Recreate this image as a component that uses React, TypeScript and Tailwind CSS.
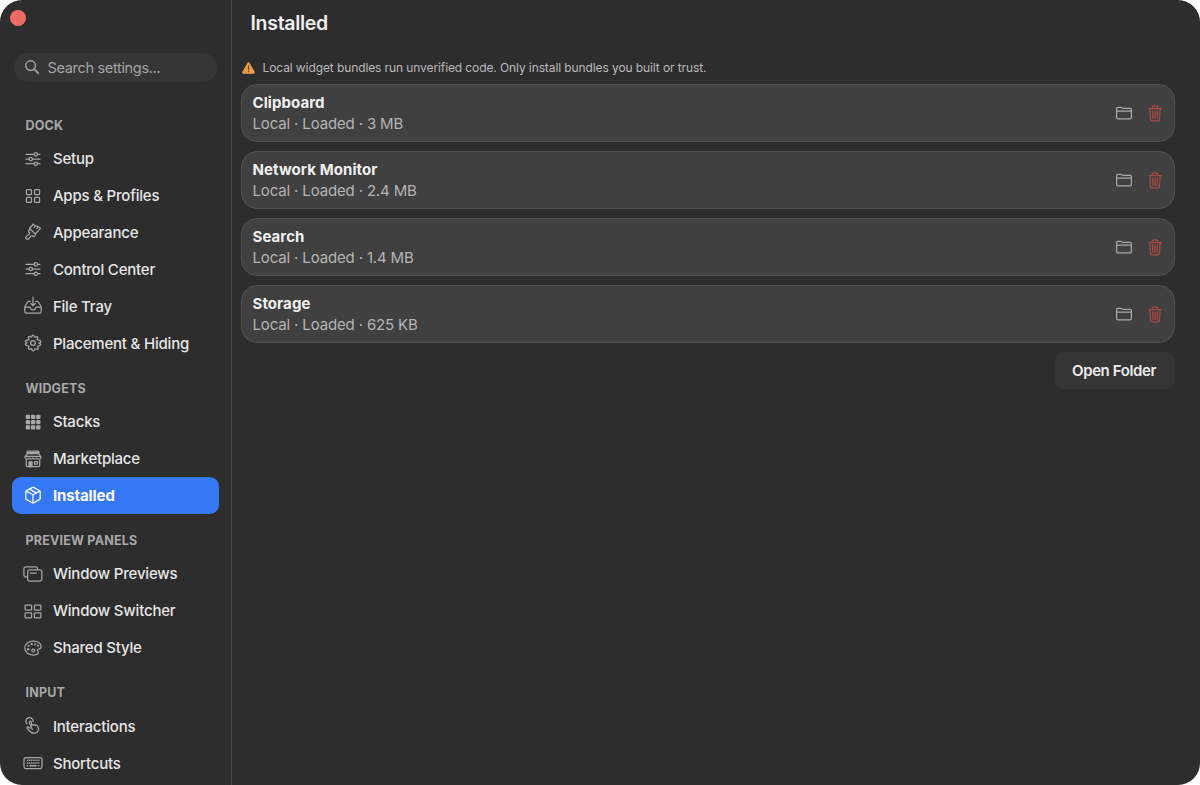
import { useState } from 'react';
import type { ReactNode } from 'react';
import clsx from 'clsx';

interface NavItem {
  label: string;
  icon: ReactNode;
}

interface NavSection {
  title: string;
  items: NavItem[];
}

interface Widget {
  name: string;
  size: string;
}

function Icon({ children }: { children: ReactNode }) {
  return (
    <svg
      viewBox="0 0 20 20"
      className="size-5 shrink-0"
      fill="none"
      stroke="currentColor"
      strokeWidth="1.25"
      strokeLinecap="round"
      strokeLinejoin="round"
    >
      {children}
    </svg>
  );
}

const slidersIcon = (
  <Icon>
    <path d="M3 5.3h7.9M14.7 5.3h2.3M3 10h2.9M9.7 10H17M3 14.7h7.9M14.7 14.7h2.3" />
    <circle cx="12.8" cy="5.3" r="1.7" />
    <circle cx="7.8" cy="10" r="1.7" />
    <circle cx="12.8" cy="14.7" r="1.7" />
  </Icon>
);

const squaresIcon = (
  <Icon>
    <rect x="3.4" y="3.6" width="5.1" height="5.1" rx="1" />
    <rect x="11.5" y="3.6" width="5.1" height="5.1" rx="1" />
    <rect x="3.4" y="11.3" width="5.1" height="5.1" rx="1" />
    <rect x="11.5" y="11.3" width="5.1" height="5.1" rx="1" />
  </Icon>
);

const brushIcon = (
  <Icon>
    <path d="M10.4 2c1 1.5 2 2 3.2 2.2 1.2.2 2.4.7 4 2L12.3 12 6.5 6.5z" />
    <path d="M7.2 7.2 5.7 8.8c-.4.5-.4.8 0 1.2l1.1 1c-.1 1.2-.9 1.6-2.2 2.3-1.7.9-2.3 2.4-1.4 3.4s2.6.6 3.5-1c.7-1.3 1.1-2.1 2.3-2.2l.9.9c.4.4.8.4 1.2 0l1.3-1.4" />
    <path d="M12.2 4l-1 1.5M14.8 5.4l-1 1.2" />
    <circle cx="4.9" cy="15.2" r=".4" fill="currentColor" stroke="none" />
  </Icon>
);

const trayIcon = (
  <Icon>
    <path d="M7.2 5.4H6c-.7 0-1.1.2-1.5.8L2.2 10c-.3.5-.4.8-.4 1.4v4c0 1.2.7 1.8 1.8 1.8h12.8c1.1 0 1.8-.6 1.8-1.8v-4c0-.6-.1-.9-.4-1.4l-2.3-3.8c-.4-.6-.8-.8-1.5-.8h-1.2" />
    <path d="M2.1 11h4.3c.5 0 .8.3.9.8.3 1.3 1.3 2.1 2.7 2.1s2.4-.8 2.7-2.1c.1-.5.4-.8.9-.8h4.3" />
    <path d="M10 1.3v8.2M7.7 7.4 10 9.7l2.3-2.3" />
  </Icon>
);

const gearIcon = (
  <Icon>
    <path d="M8.7 3.9C8.9 2.5 9.2 2.2 10 2.2s1.1.3 1.3 1.7c.1.3.6.5.9.3 1.1-.8 1.6-.9 2.2-.4.6.6.5 1.1-.2 2.2-.2.4 0 .8.4.9 1.4.2 3.2.3 3.2 1.8 0 .7-.4 1-1.6 1.3-.4.1-.4 0-.4.1s0 .1.4.2c1.2.3 1.6.6 1.6 1.3 0 1.2-1.3 1.3-2.7 1.5-.4.1-.6.5-.4.9.7 1.1.8 1.6.2 2.2-.6.5-1.1.4-2.2-.4-.3-.2-.8 0-.9.4-.3 1.3-.6 1.6-1.4 1.6s-1.5-.3-1.7-1.7c-.1-.4-.6-.5-.9-.3-1.1.7-1.6.8-2.2.3-.5-.6-.4-1.1.3-2.2.2-.3 0-.8-.3-.9-1.4-.2-3.2-.3-3.2-1.7 0-.8.3-1.1 1.6-1.4-1.3-.3-1.6-.6-1.6-1.4 0-1.4 1.8-1.5 3.2-1.7.3-.1.5-.6.3-.9-.7-1.1-.8-1.6-.3-2.2.6-.5 1.1-.4 2.2.4.4.1.8-.1.9-.5z" />
    <circle cx="10" cy="10" r="2.4" />
  </Icon>
);

const gridIcon = (
  <Icon>
    <g fill="currentColor" stroke="none">
      {[2.8, 8, 13.2].map((y) =>
        [2.7, 7.9, 13.1].map((x) => <rect key={`${x}-${y}`} x={x} y={y} width="4.4" height="4.2" rx="0.9" />)
      )}
    </g>
  </Icon>
);

const storeIcon = (
  <Icon>
    <path d="M4.6 2.2h10.8l.7 1.4H3.9z" />
    <path d="M4.2 4.6h11.6l2 3.3v.8c0 2-3.2 2-4 .3-.8 1.5-3 1.5-3.8 0-.8 1.5-3 1.5-3.8 0-.8 1.7-4 1.7-4-.3v-.8z" />
    <path d="M2.3 7.4h15.4" />
    <path d="M3.3 10.9v5.6c0 .8.4 1.2 1.2 1.2h11c.8 0 1.2-.4 1.2-1.2v-5.6" />
    <path d="M6 12.8h3v4.8H6z" fill="currentColor" />
    <path d="M11.4 12.6h3v2.4h-3z" />
  </Icon>
);

const boxIcon = (
  <Icon>
    <path d="M9.1 2.6 3.7 5.5c-.6.3-.9.8-.9 1.4v6.3c0 .6.3 1.1.9 1.4l5.4 3c.6.3 1.2.3 1.8 0l5.4-3c.6-.3.9-.8.9-1.4V6.9c0-.6-.3-1.1-.9-1.4l-5.4-2.9c-.6-.3-1.2-.3-1.8 0z" />
    <path d="M3.2 6.1 10 9.8l6.8-3.7M10 9.8v7.9M6.4 4.1l6.9 3.8" />
  </Icon>
);

const windowsIcon = (
  <Icon>
    <path d="M4.2 12.9H3.1c-1.4 0-2.2-.8-2.2-2.2V5c0-1.4.8-2.2 2.2-2.2h9.3c1.3 0 2.1.7 2.2 1.9" />
    <rect x="4.7" y="5.9" width="14.1" height="11.2" rx="2.1" />
    <path d="M7.4 9.1h5.8" />
  </Icon>
);

const switcherIcon = (
  <Icon>
    <rect x="2.1" y="4" width="6.5" height="5" rx=".7" />
    <rect x="11.4" y="4" width="6.5" height="5" rx=".7" />
    <rect x="2.1" y="11.8" width="6.5" height="5" rx=".7" />
    <rect x="11.4" y="11.8" width="6.5" height="5" rx=".7" />
  </Icon>
);

const paletteIcon = (
  <Icon>
    <path d="M18.1 8.3c-.2-3-3.4-5.3-7.8-5.3-4.9 0-8.5 2.9-8.5 7.1 0 4 3.4 6.9 8.5 6.9 2.4 0 4-.5 4.7-1.4.8-1 .2-1.8-.3-2.8-.4-.9-.1-1.5 1.3-1.8 1.5-.3 2.2-1.2 2.1-2.7z" />
    <circle cx="10.3" cy="12.6" r="1.5" />
    <g fill="currentColor" stroke="none">
      <circle cx="5.2" cy="11.3" r="1.2" />
      <circle cx="5.6" cy="7.8" r="1.1" />
      <circle cx="8.7" cy="6.1" r="1.2" />
      <circle cx="12" cy="6.3" r="1.1" />
      <circle cx="14.9" cy="7.7" r="1.1" />
    </g>
  </Icon>
);

const tapIcon = (
  <Icon>
    <path d="M4 7.8A3.6 3.6 0 1 1 10.1 5.3" />
    <path d="m7.4 12.2-1.9-1.1c-1.2-.6-2.1.5-1.3 1.4l2.9 3c1.2 1.3 2.7 1.9 4.7 1.6 1.8-.2 3-1 3.5-2.5.5-1.4.2-2.7-.7-4.6-.3-.7-1.2-1-2-.5-.4-.8-1.4-.9-2-.2-.4-.7-1.2-.8-1.8-.2L8.2 5.9c-.6-1.2-2.3-.5-1.8.8l3 6.7" />
  </Icon>
);

const keyboardIcon = (
  <Icon>
    <rect x="1" y="4.5" width="18" height="11" rx="1.7" />
    <path d="M3.8 7.2h12.6M3.8 9.9h12.6" strokeWidth="1.5" strokeDasharray="1.3 .6" strokeLinecap="butt" />
    <path d="M3.8 12.7h1.3M6.3 12.7h7.4M14.9 12.7h1.4" strokeWidth="1.5" strokeLinecap="butt" />
  </Icon>
);

const sections: NavSection[] = [
  {
    title: 'DOCK',
    items: [
      { label: 'Setup', icon: slidersIcon },
      { label: 'Apps & Profiles', icon: squaresIcon },
      { label: 'Appearance', icon: brushIcon },
      { label: 'Control Center', icon: slidersIcon },
      { label: 'File Tray', icon: trayIcon },
      { label: 'Placement & Hiding', icon: gearIcon },
    ],
  },
  {
    title: 'WIDGETS',
    items: [
      { label: 'Stacks', icon: gridIcon },
      { label: 'Marketplace', icon: storeIcon },
      { label: 'Installed', icon: boxIcon },
    ],
  },
  {
    title: 'PREVIEW PANELS',
    items: [
      { label: 'Window Previews', icon: windowsIcon },
      { label: 'Window Switcher', icon: switcherIcon },
      { label: 'Shared Style', icon: paletteIcon },
    ],
  },
  {
    title: 'INPUT',
    items: [
      { label: 'Interactions', icon: tapIcon },
      { label: 'Shortcuts', icon: keyboardIcon },
    ],
  },
];

const widgets: Widget[] = [
  { name: 'Clipboard', size: '3 MB' },
  { name: 'Network Monitor', size: '2.4 MB' },
  { name: 'Search', size: '1.4 MB' },
  { name: 'Storage', size: '625 KB' },
];

function WidgetCard({ widget }: { widget: Widget }) {
  return (
    <div className="flex h-[58.4px] items-center rounded-2xl border border-[#535353] bg-[#404040] pr-[9px] pl-[10.5px]">
      <div className="flex-1">
        <p className="text-[15px] leading-[21px] font-bold tracking-[0.08px] text-[#f0f0f0]">{widget.name}</p>
        <p className="text-[15px] leading-[21px] tracking-[-0.15px] text-[#b4b4b4]">Local · Loaded · {widget.size}</p>
      </div>
      <button className="mr-[11px] text-[#a8a8a8]" aria-label="Show in folder">
        <Icon>
          <path d="M2.6 14.4V5.7c0-.9.5-1.4 1.4-1.4h2.6c.5 0 .8.1 1.1.4l.5.4c.3.2.6.3 1 .3H16c.9 0 1.4.5 1.4 1.4v7.6c0 .9-.5 1.4-1.4 1.4H4c-.9 0-1.4-.5-1.4-1.4zM2.8 8h14.4" />
        </Icon>
      </button>
      <button className="text-[#ab4843]" aria-label="Remove">
        <Icon>
          <path d="M3.8 5.5h12.4M7.3 5.4V4.3c0-.9.5-1.4 1.4-1.4h2.6c.9 0 1.4.5 1.4 1.4v1.1M4.9 5.7l.6 10.9c.1.8.5 1.2 1.3 1.2h6.4c.8 0 1.2-.4 1.3-1.2l.6-10.9" />
          <path d="m7.6 8 .2 7.3M10 8v7.3M12.4 8l-.2 7.3" />
        </Icon>
      </button>
    </div>
  );
}

function App() {
  const [active, setActive] = useState('Installed');

  return (
    <div className="h-[785px] w-[1200px] bg-white">
      <div className="flex h-full overflow-hidden rounded-[22px] bg-[#2d2d2d] font-['Inter','Liberation_Sans',sans-serif]">
        {/* Sidebar */}
        <aside className="h-full w-[232px] shrink-0 overflow-hidden border-r border-[#4a4a4a] pr-3 pl-[11.5px]">
          <div className="mt-[10.2px] -ml-[1.3px] size-4 rounded-full bg-[#ee6a64]" />

          <div className="mt-[26.8px] mr-[2.5px] ml-[2px] flex h-[29px] items-center rounded-full bg-[#363636] pl-[11px] text-[#a5a5a5]">
            <svg viewBox="0 0 14 14" className="mr-[9px] size-[14px]" fill="none" stroke="currentColor" strokeWidth="1.4" strokeLinecap="round">
              <circle cx="5.6" cy="5.6" r="4.8" />
              <path d="m9.2 9.2 4 4" strokeWidth="1.7" />
            </svg>
            <span className="text-[14.5px] tracking-[-0.32px]">Search settings...</span>
          </div>

          <nav className="mt-[16.7px]">
            {sections.map((section) => (
              <div key={section.title}>
                <h2 className="flex h-[41.6px] items-end pb-[6.7px] pl-[14px] text-[12.5px] leading-4 font-bold tracking-[0.2px] text-[#a8a8a8]">
                  {section.title}
                </h2>
                {section.items.map((item) => (
                  <button
                    key={item.label}
                    onClick={() => setActive(item.label)}
                    className={clsx(
                      'flex h-[36.9px] w-full items-center gap-[9.5px] rounded-[9px] pl-[11.9px] text-[15px]',
                      active === item.label ? 'bg-[#3478f6] font-bold text-white' : 'font-medium text-[#a6a6a6]'
                    )}
                  >
                    {item.icon}
                    <span
                      className={clsx(
                        'pt-[1.6px]',
                        active === item.label ? 'tracking-[-0.1px]' : 'tracking-[-0.2px] text-[#e6e6e6]'
                      )}
                    >
                      {item.label}
                    </span>
                  </button>
                ))}
              </div>
            ))}
          </nav>
        </aside>

        {/* Content */}
        <main className="flex-1 pr-[25px] pl-[9px]">
          <h1 className="pt-[10px] pl-[9.5px] text-[19.5px] leading-[26px] font-semibold tracking-[-0.3px] text-[#f0f0f0]">Installed</h1>

          <div className="mt-[22px] flex h-5 items-center gap-2 pl-[0.5px] text-[12px] text-[#bababa]">
            <svg viewBox="0 0 13 12" className="h-3 w-[13px]">
              <path d="M5.4 1 .4 9.8c-.5 1 0 1.9 1.1 1.9h10c1.1 0 1.6-.9 1.1-1.9L7.6 1C7.1.1 5.9.1 5.4 1z" fill="#eb9f4d" />
              <path d="M6.5 3.8v3.7M6.5 9.3v.3" stroke="#6b4520" strokeWidth="1.3" strokeLinecap="round" />
            </svg>
            <p className="tracking-[-0.1px]">Local widget bundles run unverified code. Only install bundles you built or trust.</p>
          </div>

          <div className="mt-[6px] flex flex-col gap-[8.6px]">
            {widgets.map((widget) => (
              <WidgetCard key={widget.name} widget={widget} />
            ))}
          </div>

          <div className="mt-[9px] flex justify-end">
            <button className="h-[37px] w-[120px] rounded-[9px] bg-[#353535] pr-[2px] text-[15px] font-semibold tracking-[-0.4px] text-[#ececec]">
              Open Folder
            </button>
          </div>
        </main>
      </div>
    </div>
  );
}

export default App;
